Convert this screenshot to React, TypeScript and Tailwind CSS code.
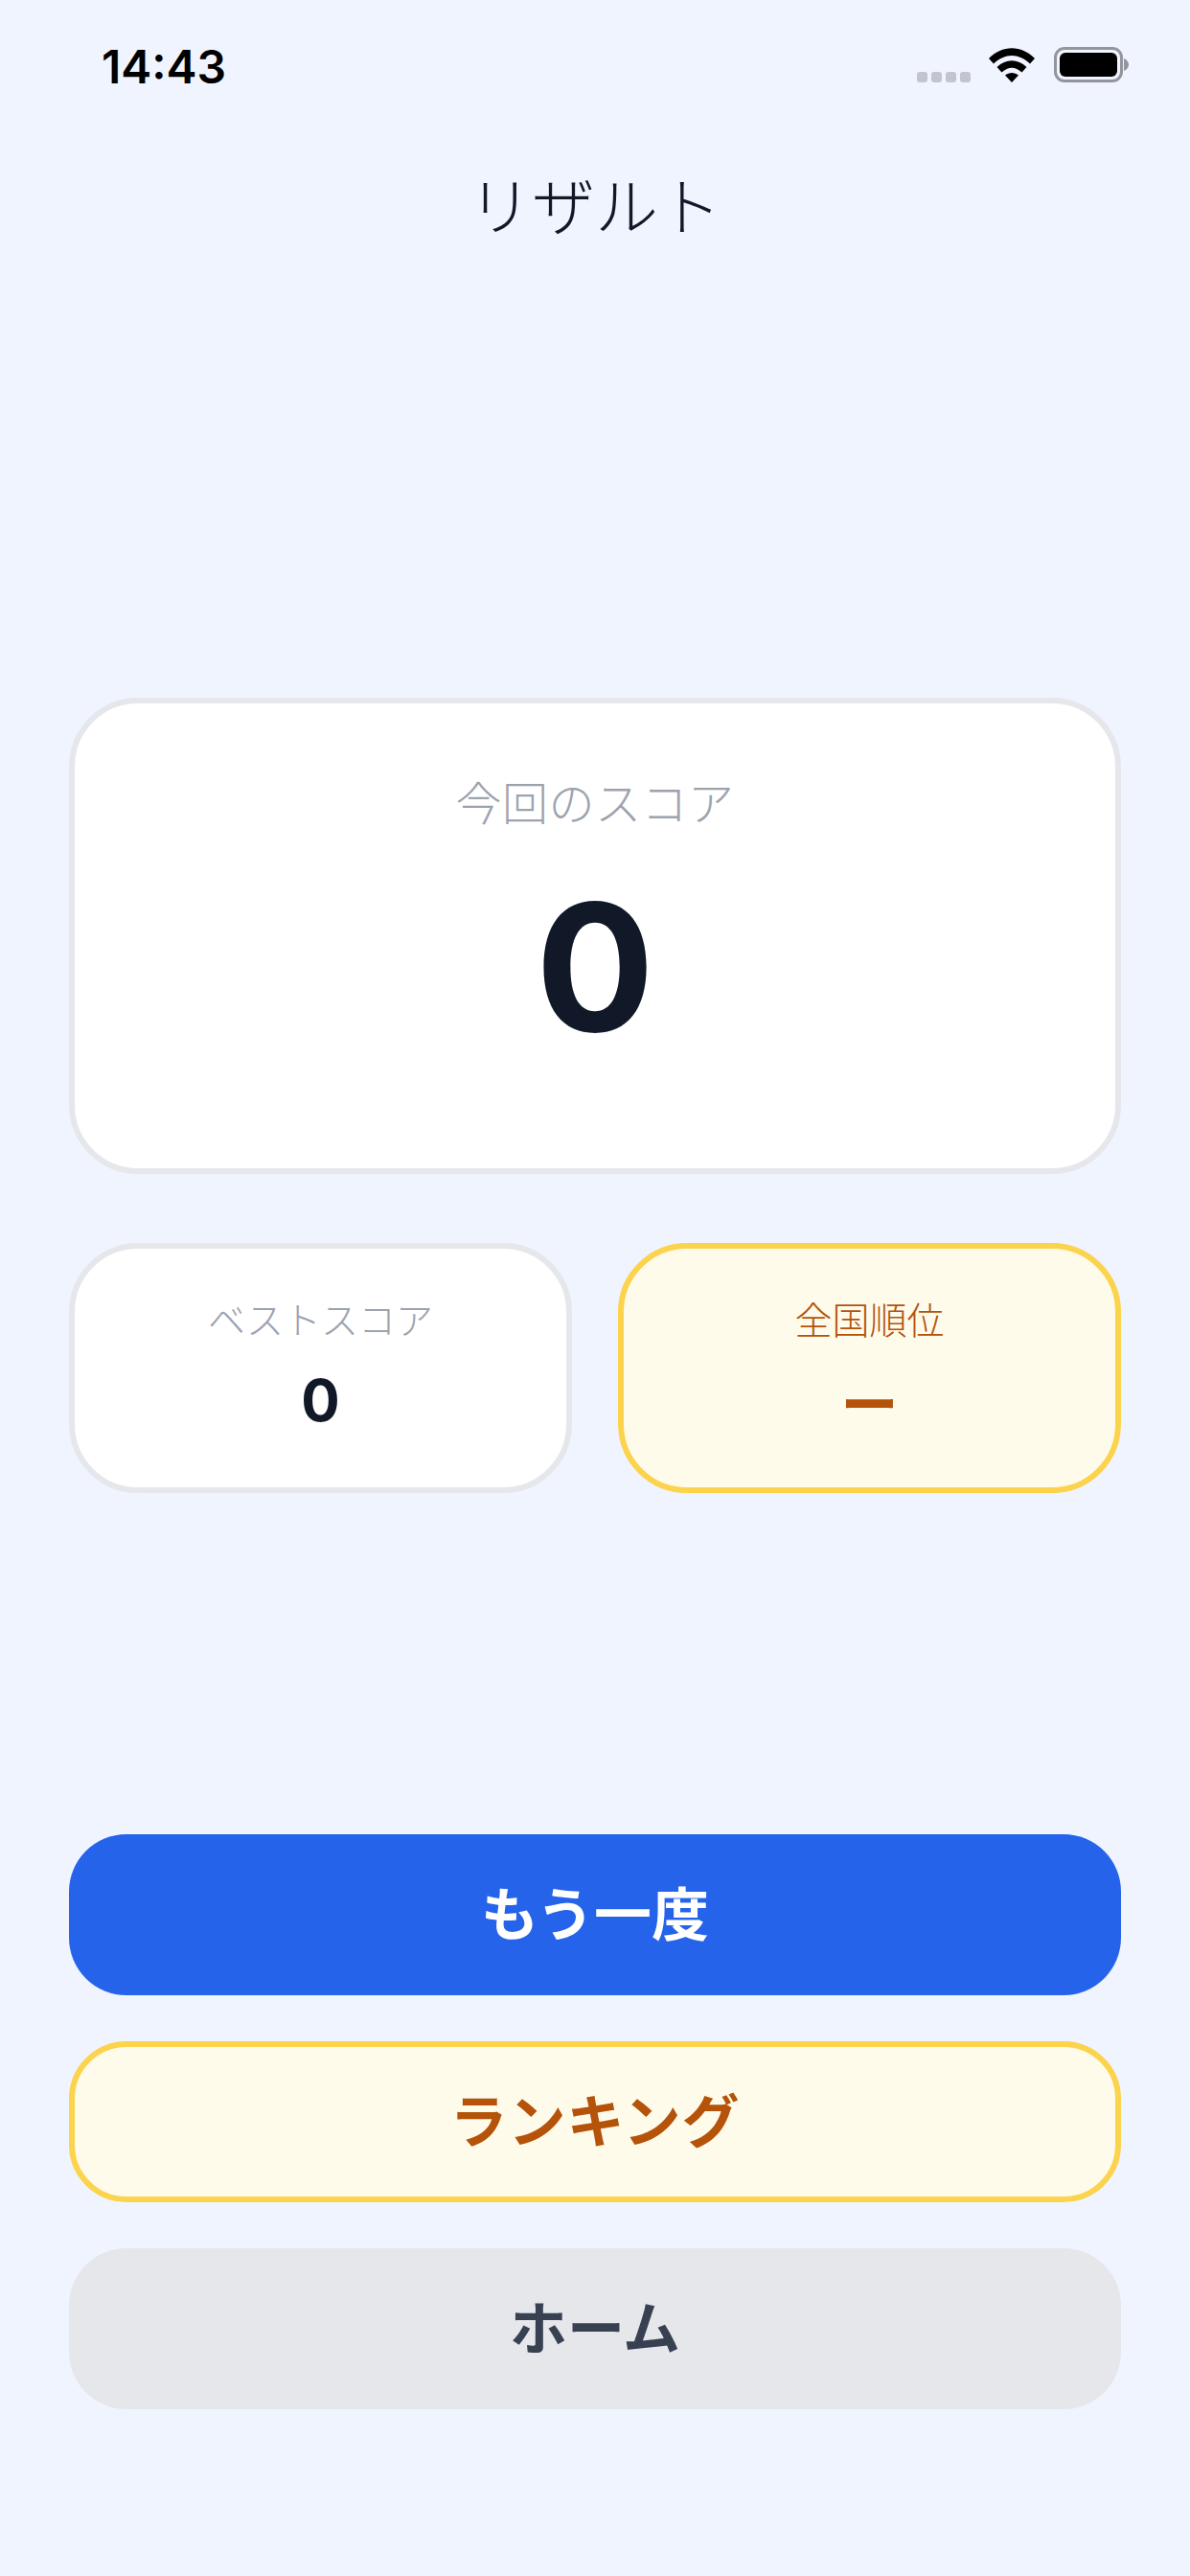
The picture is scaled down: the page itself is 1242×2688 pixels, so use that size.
import React from "react";

const fontStack = "font-['Inter','Noto_Sans_CJK_JP',sans-serif]";

function StatusBar() {
  return (
    <div className="flex h-[132px] items-start justify-between pl-[106px] pr-[64px] pt-[47px]">
      <span className="text-[48px] leading-[46px] font-semibold text-black">14:43</span>
      <div className="-mt-[3px] flex items-end pt-[5px]">
        <div className="flex gap-[4px]">
          <span className="h-[11px] w-[11px] rounded-[3px] bg-[#c2c5d0]" />
          <span className="h-[11px] w-[11px] rounded-[3px] bg-[#c2c5d0]" />
          <span className="h-[11px] w-[11px] rounded-[3px] bg-[#c2c5d0]" />
          <span className="h-[11px] w-[11px] rounded-[3px] bg-[#c2c5d0]" />
        </div>
        <svg className="ml-[19px]" width="48" height="36" viewBox="0 0 48 36">
          <path d="M0 11 C 14 -3.5 34 -3.5 48 11 L 43 16.5 C 31 5 17 5 5 16.5 Z" fill="#000" />
          <path d="M8.5 20 C 18 11 30 11 39.5 20 L 34.5 25.5 C 27.5 19 20.5 19 13.5 25.5 Z" fill="#000" />
          <path d="M17 28.5 C 21 25 27 25 31 28.5 L 24 36 Z" fill="#000" />
        </svg>
        <div className="ml-[20px] flex items-center">
          <div className="h-[37px] w-[72px] rounded-[11px] border-[3px] border-[#93959c] p-[3px]">
            <div className="h-full w-full rounded-[6px] bg-black" />
          </div>
          <svg className="ml-[1px]" width="5" height="13" viewBox="0 0 5 13">
            <path d="M0 0 C 3 1 5 4 5 6.5 C 5 9 3 12 0 13 Z" fill="#93959c" />
          </svg>
        </div>
      </div>
    </div>
  );
}

function SmallStat({ label, value, yellow }: { label: string; value: string; yellow?: boolean }) {
  return (
    <div
      className={`flex h-[261px] flex-col items-center rounded-[72px] border-[6px] pt-[45px] ${
        yellow ? "border-[#fcd34d] bg-[#fffbeb]" : "border-[#e5e7eb] bg-white"
      }`}
    >
      <div className={`text-[39px] leading-[60px] font-light ${yellow ? "text-[#b45309]" : "text-[#9ca3af]"}`}>{label}</div>
      <div
        className={`text-[60px] leading-[84px] font-bold ${
          yellow ? "mt-[16px] text-[#b45309]" : "mt-[11px] text-[#111827]"
        }`}
      >
        {value}
      </div>
    </div>
  );
}

export default function App() {
  return (
    <div className={`flex h-[2688px] w-[1242px] flex-col bg-[#f0f4ff] ${fontStack}`}>
      <StatusBar />

      <h1 className="h-[240px] pt-[45px] text-center text-[66px] leading-[78px] font-light text-[#111827]">リザルト</h1>

      <div className="flex flex-1 flex-col justify-center gap-[72px] px-[72px]">
        <div className="flex h-[497px] flex-col items-center rounded-[72px] border-[6px] border-[#e5e7eb] bg-white pt-[69px]">
          <div className="text-[48px] leading-[72px] font-light tracking-[0.5px] text-[#9ca3af]">今回のスコア</div>
          <div className="mt-[42px] text-[184px] leading-[184px] font-bold text-[#111827]">0</div>
        </div>
        <div className="grid grid-cols-2 gap-[48px]">
          <SmallStat label="ベストスコア" value="0" />
          <SmallStat label="全国順位" value="ー" yellow />
        </div>
      </div>

      <div className="flex flex-col gap-[48px] px-[72px] pb-[174px]">
        <button className="h-[168px] rounded-[60px] bg-[#2563eb] text-[60px] font-semibold text-white">もう一度</button>
        <button className="h-[168px] rounded-[60px] border-[6px] border-[#fcd34d] bg-[#fffbeb] text-[60px] font-semibold tracking-[1px] text-[#b45309]">
          ランキング
        </button>
        <button className="h-[168px] rounded-[60px] bg-[#e5e7eb] text-[60px] font-semibold text-[#374151]">ホーム</button>
      </div>
    </div>
  );
}
